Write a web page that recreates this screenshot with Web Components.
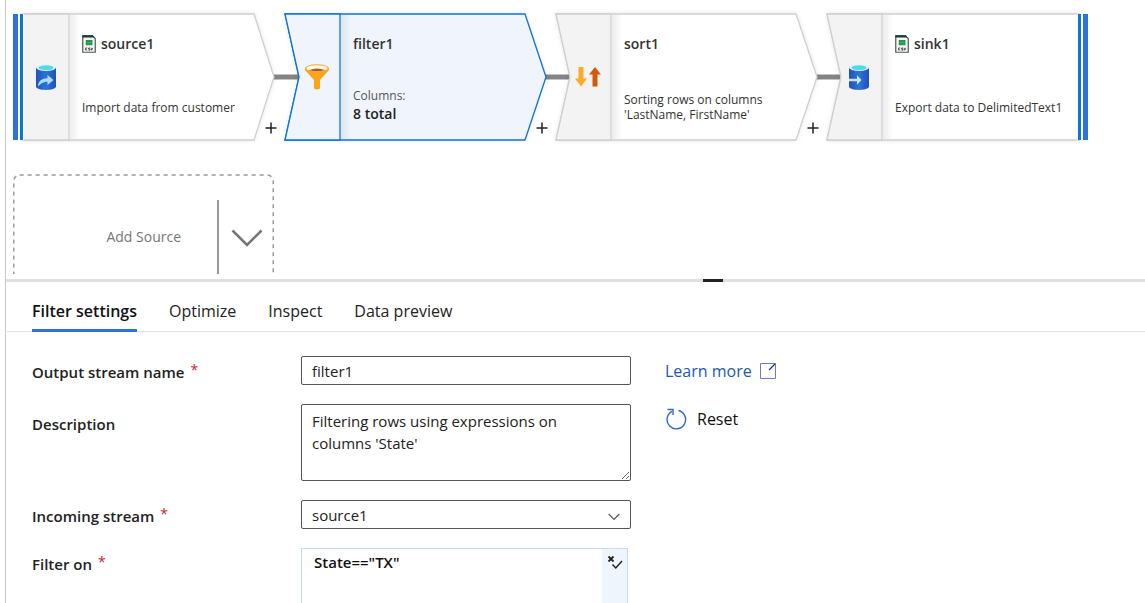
<!DOCTYPE html>
<html lang="en">
<head>
<meta charset="utf-8">
<title>Data flow</title>
<style>
  html, body { height: 100%; }
  body {
    margin: 0;
    overflow: hidden;
    background: #fff;
    color: #111;
    font-family: "Open Sans", "Noto Sans", sans-serif;
    font-size: 14px;
  }
</style>
</head>
<body>
<flow-app></flow-app>

<script>
const ICONS = {
  source: `<svg width="22" height="28" viewBox="0 0 22 28" aria-hidden="true">
    <defs><linearGradient id="g" x1="0" x2="1"><stop offset="0" stop-color="#2052b8"/><stop offset=".5" stop-color="#2d74d6"/><stop offset="1" stop-color="#2052b8"/></linearGradient></defs>
    <path d="M1 4.500V23.500C1 28 21 28 21 23.500V4.500Z" fill="url(#g)"/>
    <ellipse cx="11" cy="4.500" rx="10" ry="3.500" fill="#e6f4fb"/><ellipse cx="11" cy="4.700" rx="7.500" ry="2.500" fill="#4fd8ee"/>
    <path d="M3 23.500C3 18 7 15.200 12.500 15.200V12L18.500 17L12.500 22V18.800C8 18.800 6 20.500 3 23.500Z" fill="#a9dcf8"/></svg>`,
  sink: `<svg width="22" height="28" viewBox="0 0 22 28" aria-hidden="true">
    <defs><linearGradient id="g" x1="0" x2="1"><stop offset="0" stop-color="#2052b8"/><stop offset=".5" stop-color="#2d74d6"/><stop offset="1" stop-color="#2052b8"/></linearGradient></defs>
    <path d="M1 4.500V23.500C1 28 21 28 21 23.500V4.500Z" fill="url(#g)"/>
    <ellipse cx="11" cy="4.500" rx="10" ry="3.500" fill="#e6f4fb"/><ellipse cx="11" cy="4.700" rx="7.500" ry="2.500" fill="#4fd8ee"/>
    <path d="M1 15.800H9V12.200L13.500 17L9 21.800V18.200H1Z" fill="#c3e6fb"/></svg>`,
  filter: `<svg width="26" height="28" viewBox="0 0 26 28" aria-hidden="true">
    <path d="M1 5.500C1 7 1.500 7.600 2.500 8.700L10 17V25.500Q13 27.500 16 25.500V17L23.500 8.700C24.500 7.600 25 7 25 5.500Z" fill="#f9a51a"/>
    <ellipse cx="13" cy="5.500" rx="12" ry="4.200" fill="#f9a92a"/><ellipse cx="13" cy="5.200" rx="10.500" ry="3" fill="#fff6e6"/>
    <path d="M5 7.200Q13 3.600 21 7.200Q13 9.200 5 7.200Z" fill="#b5532a"/></svg>`,
  sort: `<svg width="28" height="22" viewBox="0 0 28 22" aria-hidden="true">
    <path d="M4.500 1.500Q4.500 1 5 1H9Q9.500 1 9.500 1.500V12.500H13L7 20.500L1 12.500H4.500Z" fill="#fdaa26"/>
    <path d="M18.500 20Q18.500 20.500 19 20.500H23Q23.500 20.500 23.500 20V8.500H27L21 1L15 8.500H18.500Z" fill="#d45a0a"/></svg>`,
  file: `<svg width="14" height="18" viewBox="0 0 14 18" aria-hidden="true">
    <path d="M.75.75H10.500L13.250 3.500V17.250H.75Z" fill="#f4f6f5" stroke="#4c5560" stroke-width="1.200"/>
    <path d="M.3.3H10.800L12.500 2.500H.3Z" fill="#12402a"/>
    <rect x="3.800" y="5" width="6.600" height="5.200" fill="#18913f"/><path d="M3.800 7.600H10.400M6 5V10.200M8.200 5V10.200" stroke="#6fc08a" stroke-width=".4"/>
    <path d="M5.200 13H3.600V15H5.200M8 13H6.600V14H8V15.200H6.500M9 12.800L9.800 15.200L10.600 12.800" fill="none" stroke="#333" stroke-width=".8"/></svg>`
};

function define(name, html, setup) {
  const template = document.createElement("template");
  template.innerHTML = html;
  customElements.define(name, class extends HTMLElement {
    constructor() {
      super();
      this.attachShadow({ mode: "open" }).append(template.content.cloneNode(true));
    }
    connectedCallback() {
      if (setup) setup(this, this.shadowRoot);
    }
  });
}

/* A step of the flow: outline, icon cell, text and add button. */
const SHAPES = {
  first: { outline: "M10 1H241L261 64L241 127H10Z", cell: "M10 1H56V127H10Z", bars: [[0, 5], [7, 3]] },
  step: { outline: "M1 1H241L262 64L241 127H1L15 64Z", cell: "M1 1H56V127H1L15 64Z", bars: [] },
  last: { outline: "M1 1H253V127H1L15 64Z", cell: "M1 1H56V127H1L15 64Z", bars: [[252, 3], [257, 5]] }
};
define("flow-node", `
  <style>
    :host { display: grid; grid-template-columns: 56px 1fr 26px; position: relative; width: 271px; height: 128px; flex: none; }
    .shape { position: absolute; inset: 0; overflow: visible; }
    .icon { position: relative; display: flex; align-items: center; justify-content: center; padding-left: 10px; }
    .text { position: relative; display: flex; flex-direction: column; justify-content: space-between; padding: 21px 0 16px 13px; white-space: nowrap; }
    h2 { display: flex; align-items: center; gap: 5px; margin: 0; font-size: 14px; line-height: 20px; font-weight: 600; color: #333; }
    .note { display: flex; flex-direction: column; justify-content: center; height: 36px; font-size: 12px; line-height: 15px; color: #333; }
    button { position: relative; align-self: end; height: 26px; padding: 0; border: 0; background: none; display: flex; align-items: center; justify-content: center; }
  </style>
  <svg class="shape" width="271" height="128" aria-hidden="true">
    <defs><linearGradient id="fade"><stop offset="0" stop-color="#000" stop-opacity=".07"/><stop offset="1" stop-color="#000" stop-opacity="0"/></linearGradient></defs>
    <path class="line" d="M261 64H287" stroke="#848484" stroke-width="5"/>
    <path class="outline" stroke-width="1.300" style="filter:drop-shadow(0 0 2px rgba(0,0,0,.1))"/>
    <path class="cell" stroke-width="1.300"/>
    <rect x="57" y="2" width="10" height="124" fill="url(#fade)"/>
    <g class="bars"></g>
  </svg>
  <div class="icon"></div>
  <div class="text"><h2><span class="file"></span><slot name="title"></slot></h2><div class="note"><slot></slot></div></div>
  <button aria-label="Add step"><svg width="12" height="12" aria-hidden="true"><path d="M6 0.500V11.500M.5 6H11.500" stroke="#222" stroke-width="1.500"/></svg></button>
`, (host, root) => {
  const kind = host.getAttribute("kind");
  const shape = SHAPES[kind];
  const active = host.hasAttribute("active");
  const outline = root.querySelector(".outline");
  const cell = root.querySelector(".cell");
  outline.setAttribute("d", shape.outline);
  cell.setAttribute("d", shape.cell);
  for (const path of [outline, cell]) path.setAttribute("stroke", active ? "#0f73d6" : "#d0d0d0");
  outline.setAttribute("fill", active ? "#f0f5fd" : "#fff");
  cell.setAttribute("fill", active ? "#f0f5fd" : "#f3f3f3");
  root.querySelector(".bars").innerHTML = shape.bars.map(([x, w]) =>
    `<rect x="${x - 1}" y="1" width="${w + 2}" height="126" fill="#fff"/><rect x="${x}" y="1" width="${w}" height="126" fill="${w > 3 ? "#2f72d8" : "#0a75de"}"/>`).join("");
  root.querySelector(".icon").innerHTML = ICONS[host.getAttribute("icon")];
  if (host.hasAttribute("file")) root.querySelector(".file").outerHTML = ICONS.file;
  else root.querySelector(".file").remove();
  if (kind === "last") {
    root.querySelector("button").remove();
    root.querySelector(".line").remove();
  }
});

define("add-source", `
  <style>
    :host { display: block; position: relative; width: 261px; height: 128px; }
    .frame { position: absolute; inset: 0; }
    div { position: relative; display: grid; grid-template-columns: 1fr 57px; padding-top: 26px; height: 102px; }
    button { font: inherit; color: #767676; background: none; border: 0; padding: 0; }
    .main { font-size: 14px; line-height: 20px; padding: 0 36px 28px 0; text-align: right; }
    .more { border-left: 2px solid #9a9a9a; padding-bottom: 26px; display: flex; align-items: center; justify-content: center; }
  </style>
  <svg class="frame" width="261" height="128" aria-hidden="true"><rect x="0.750" y="1" width="259.500" height="126" rx="6" fill="none" stroke="#999" stroke-width="1.500" stroke-dasharray="4 4"/></svg>
  <div>
    <button class="main">Add Source</button>
    <button class="more" aria-label="More source options"><svg width="32" height="18" aria-hidden="true"><path d="M1.500 1.500L16 16L30.500 1.500" fill="none" stroke="#777" stroke-width="2.600"/></svg></button>
  </div>
`);

define("flow-canvas", `
  <style>
    :host { display: flex; flex-direction: column; gap: 33px; flex: none; height: 261px; padding: 13px 0 0 7px; margin-bottom: 5px; overflow: hidden; }
    .row { display: flex; }
    b { font-weight: 600; font-size: 14px; line-height: 18px; padding-bottom: 4px; color: #222; }
    .dim { line-height: 18px; color: #555; }
  </style>
  <div class="row">
    <flow-node kind="first" icon="source" file><span slot="title">source1</span><span>Import data from customer</span></flow-node>
    <flow-node kind="step" icon="filter" active><span slot="title">filter1</span><span class="dim">Columns:</span><b>8 total</b></flow-node>
    <flow-node kind="step" icon="sort"><span slot="title">sort1</span><span>Sorting rows on columns</span><span>'LastName, FirstName'</span></flow-node>
    <flow-node kind="last" icon="sink" file><span slot="title">sink1</span><span>Export data to DelimitedText1</span></flow-node>
  </div>
  <add-source></add-source>
`);

define("pane-splitter", `
  <style>
    :host { display: flex; justify-content: center; flex: none; height: 3px; background: #e0e0e0; padding-left: 274px; cursor: row-resize; }
    i { width: 20px; background: #222; }
  </style><i></i>
`);

define("tab-bar", `
  <style>
    :host { display: flex; flex: none; gap: 32px; padding-left: 25px; margin-left: 1px; border-bottom: 1px solid #e0e0e0; }
    button { font: inherit; font-size: 16px; line-height: 24px; color: #222; background: none; border: 0; border-bottom: 3px solid transparent; padding: 17px 0 6px; margin-bottom: -1px; white-space: nowrap; }
    button[aria-selected=true] { font-weight: 600; color: #111; border-color: #2f72d6; }
  </style>
`, (host, root) => {
  host.setAttribute("role", "tablist");
  host.getAttribute("tabs").split("|").forEach((name, i) => {
    const button = document.createElement("button");
    button.setAttribute("role", "tab");
    button.setAttribute("aria-selected", i === 0);
    button.textContent = name;
    root.append(button);
  });
});

/* A labelled control with room for actions at its right. */
const fieldStyle = `
  <style>
    :host { display: grid; grid-template-columns: 269px 330px 1fr; align-items: start; }
    label { font-size: 15px; line-height: 20px; font-weight: 600; padding-top: 6px; color: #222; }
    sup { color: #c4262e; font-size: 14px; font-weight: 400; line-height: 0; vertical-align: 3px; margin-left: 6px; }
    input, select, textarea { box-sizing: border-box; display: block; width: 100%; margin: 0; border: 1px solid #555; border-radius: 2px; background-color: #fff; color: #222; font: inherit; font-size: 15px; line-height: 22px; outline: 0; }
    input, select { height: 29px; padding: 1px 10px 0; }
    ::slotted(*) { margin-left: 34px; }
  </style>`;
const fillLabel = (host, root) => {
  root.querySelector("label span").textContent = host.getAttribute("label");
  if (!host.hasAttribute("required")) root.querySelector("sup").remove();
};
const label = `<label for="control"><span></span><sup>*</sup></label>`;

define("text-field", `${fieldStyle}${label}<input id="control"><slot></slot>`, (host, root) => {
  fillLabel(host, root);
  root.querySelector("input").value = host.getAttribute("value");
});

define("area-field", `${fieldStyle}
  <style>label { padding-top: 10px; } textarea { height: 77px; padding: 5px 10px; resize: vertical; overflow: hidden; }</style>
  ${label}<textarea id="control"></textarea><slot></slot>`, (host, root) => {
  fillLabel(host, root);
  root.querySelector("textarea").value = host.getAttribute("value");
});

define("select-field", `${fieldStyle}
  <style>
    select { appearance: none; }
    .box { position: relative; }
    svg { position: absolute; right: 11px; top: 13px; pointer-events: none; }
  </style>
  ${label}<div class="box"><select id="control"></select><svg width="12" height="8" aria-hidden="true"><path d="M.7 1L6 6.500L11.300 1" fill="none" stroke="#555" stroke-width="1.200"/></svg></div>`, (host, root) => {
  fillLabel(host, root);
  root.querySelector("select").add(new Option(host.getAttribute("value")));
});

define("expression-field", `${fieldStyle}
  <style>
    .box { display: grid; grid-template-columns: 1fr 25px; margin-right: 3px; border: 1px solid #c3dcf3; }
    .box textarea { border: 0; height: 100px; padding: 3px 12px; resize: none; font-size: 15px; line-height: 20px; font-weight: 600; color: #111; }
    button { display: flex; align-items: start; justify-content: center; border: 0; padding: 6px 0 0; background: #eff5fd; }
  </style>
  ${label}<div class="box"><textarea id="control" spellcheck="false"></textarea><button aria-label="Validate expression"><svg width="16" height="15" aria-hidden="true"><path d="M1.500 1.500L6.500 6.500M6.500 1.500L1.500 6.500" stroke="#222" stroke-width="1.800"/><path d="M5.500 9.500L8.800 13L15 6" fill="none" stroke="#222" stroke-width="1.500"/></svg></button></div>`, (host, root) => {
  fillLabel(host, root);
  root.querySelector("textarea").value = host.getAttribute("value");
});

define("learn-more", `
  <style>
    :host { display: block; padding-top: 4px; }
    a { display: flex; align-items: center; gap: 8px; font-size: 16px; line-height: 22px; color: #2159b0; text-decoration: none; }
  </style>
  <a href="#"><slot></slot><svg width="17" height="17" aria-hidden="true"><path d="M10 .5H.5V15.500H15.500V7.500" fill="none" stroke="#6f78cc"/><path d="M9 .5H15.500V8" fill="none" stroke="#6f78cc"/><path d="M9 7L15 1" stroke="#1b2f9c" stroke-width="1.300"/></svg></a>
`);

define("reset-button", `
  <style>
    :host { display: block; padding-top: 4px; }
    button { display: flex; align-items: center; gap: 10px; border: 0; padding: 0; background: none; font: inherit; font-size: 16px; line-height: 22px; color: #111; }
  </style>
  <button><svg width="22" height="22" aria-hidden="true"><path d="M13.500 2.500A9.300 9.300 0 1 1 7 3.300" fill="none" stroke="#3468c0" stroke-width="1.400"/><path d="M2.500 1.500H8V7" fill="none" stroke="#3468c0" stroke-width="1.400"/></svg><slot></slot></button>
`);

define("settings-form", `
  <style>:host { display: grid; gap: 19px; padding: 24px 0 0 26px; }</style><slot></slot>
`);

define("flow-app", `
  <style>
    :host { display: flex; flex-direction: column; height: 100vh; margin-left: 5px; border-left: 1px solid #c8c8c8; overflow: hidden; }
  </style>
  <flow-canvas></flow-canvas>
  <pane-splitter></pane-splitter>
  <tab-bar tabs="Filter settings|Optimize|Inspect|Data preview"></tab-bar>
  <settings-form>
    <text-field label="Output stream name" value="filter1" required><learn-more>Learn more</learn-more></text-field>
    <area-field label="Description" value="Filtering rows using expressions on columns 'State'"><reset-button>Reset</reset-button></area-field>
    <select-field label="Incoming stream" value="source1" required></select-field>
    <expression-field label="Filter on" value='State=="TX"' required></expression-field>
  </settings-form>
`);
</script>
</body>
</html>
